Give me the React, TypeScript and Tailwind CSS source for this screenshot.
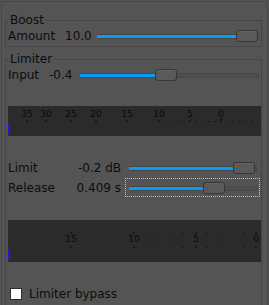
import React from "react";

function Slider({
  wClass,
  fillClass,
  thumbClass,
}: {
  wClass: string;
  fillClass: string;
  thumbClass: string;
}) {
  return (
    <div className={`relative h-[12px] shrink-0 ${wClass}`}>
      <div className="absolute left-0 right-0 top-[4px] h-[5px] border border-[#474747] bg-[#4e4e4e]" />
      <div className={`absolute left-0 top-[5px] h-[3px] bg-[#0a9cf4] ${fillClass}`} />
      <div
        className={`absolute top-0 h-[12px] w-[22px] rounded-[3px] border border-[#363636] bg-[#5a5a5a] shadow-[inset_0_1px_0_#646464] ${thumbClass}`}
      />
    </div>
  );
}

function Meter1() {
  const labels: [number, string][] = [
    [19, "35"],
    [38, "30"],
    [63, "25"],
    [88, "20"],
    [119, "15"],
    [151, "10"],
    [182, "5"],
    [213, "0"],
  ];
  const dots: number[] = [];
  for (let db = 9; db >= -6; db--) {
    if (db === 5 || db === 0) continue;
    dots.push(213 - 6.2 * db);
  }
  return (
    <svg width="253" height="30" className="block">
      <rect x="0" y="0" width="253" height="30" fill="#2b2b2b" />
      {labels.map(([x, t]) => (
        <text
          key={t}
          x={x}
          y={11}
          fontSize="9"
          fontFamily="DejaVu Sans, sans-serif"
          textAnchor="middle"
          fill="#0a0a0a"
        >
          {t}
        </text>
      ))}
      {labels.map(([x, t]) =>
        t === "0" ? (
          <rect key={"t" + t} x={x - 0.5} y={12} width="1" height="4" fill="#0a0a0a" />
        ) : (
          <rect key={"t" + t} x={x - 0.5} y={14} width="1" height="2" fill="#0a0a0a" />
        )
      )}
      {dots.map((x, i) => (
        <rect key={i} x={Math.round(x) - 0.5} y={15} width="1" height="1" fill="#0a0a0a" />
      ))}
      <rect x="0" y="17" width="1.5" height="11" fill="#1c1ce6" />
    </svg>
  );
}

function Meter2() {
  const labels: [number, string][] = [
    [63, "15"],
    [126, "10"],
    [188, "5"],
    [248, "0"],
  ];
  const dots: number[] = [];
  for (let db = 9; db >= 1; db--) {
    if (db === 5) continue;
    dots.push(248 - 12.2 * db);
  }
  return (
    <svg width="253" height="42" className="block">
      <rect x="0" y="0" width="253" height="42" fill="#2b2b2b" />
      {labels.map(([x, t]) => (
        <text
          key={t}
          x={x}
          y={22}
          fontSize="9"
          fontFamily="DejaVu Sans, sans-serif"
          textAnchor="middle"
          fill="#0a0a0a"
        >
          {t}
        </text>
      ))}
      {labels.map(([x, t]) => (
        <g key={"t" + t}>
          <rect x={x - 0.5} y={12} width="1" height="2" fill="#0a0a0a" />
          <rect x={x - 0.5} y={26} width="1" height="2" fill="#0a0a0a" />
        </g>
      ))}
      {dots.map((x, i) => (
        <g key={i}>
          <rect x={Math.round(x) - 0.5} y={13} width="1" height="1" fill="#0a0a0a" />
          <rect x={Math.round(x) - 0.5} y={27} width="1" height="1" fill="#0a0a0a" />
        </g>
      ))}
      <rect x="0" y="29" width="1.5" height="11" fill="#1c1ce6" />
    </svg>
  );
}

export default function App() {
  return (
    <div className="h-[305px] w-[269px] overflow-hidden bg-[#545454] font-['DejaVu_Sans',sans-serif] text-[12px] leading-[14px] text-[#0d0d0d]">
      <div className="ml-px mt-px h-[320px] w-[267px] border-l border-r border-t border-[#474747]">
        <fieldset className="ml-[3px] mt-[11px] w-[257px] border border-[#464646] pb-[4px] pl-[2px]">
          <legend className="px-[2px] leading-[14px]">Boost</legend>
          <div className="mt-[3px] flex h-[12px] items-center">
            <div className="w-[57px] shrink-0">Amount</div>
            <div className="w-[32px] shrink-0">10.0</div>
            <Slider wClass="w-[162px]" fillClass="w-[139px]" thumbClass="left-[139px]" />
          </div>
        </fieldset>

        <fieldset className="ml-[3px] mt-[5px] w-[257px] border border-[#464646] pb-[20px] pl-[2px]">
          <legend className="px-[2px] leading-[14px]">Limiter</legend>
          <div className="mt-[3px] flex h-[12px] items-center">
            <div className="w-[41px] shrink-0">Input</div>
            <div className="w-[31px] shrink-0">-0.4</div>
            <Slider wClass="w-[179px]" fillClass="w-[75px]" thumbClass="left-[75px]" />
          </div>

          <div className="mt-[25px]">
            <Meter1 />
          </div>

          <div className="mt-[22px] flex h-[19px] items-center">
            <div className="w-[60px] shrink-0">Limit</div>
            <div className="w-[53px] shrink-0 text-right">-0.2 dB</div>
            <div className="ml-[4px] flex h-[19px] w-[135px] shrink-0 items-center border border-transparent pl-[3px]">
              <Slider wClass="w-[128px]" fillClass="w-[104px]" thumbClass="left-[104px]" />
            </div>
          </div>
          <div className="mt-[1px] flex h-[19px] items-center">
            <div className="w-[60px] shrink-0">Release</div>
            <div className="w-[53px] shrink-0 text-right">0.409 s</div>
            <div className="ml-[4px] flex h-[19px] w-[135px] shrink-0 items-center border border-dotted border-[#c4c4c4] pl-[3px]">
              <Slider wClass="w-[128px]" fillClass="w-[74px]" thumbClass="left-[74px]" />
            </div>
          </div>

          <div className="mt-[23px]">
            <Meter2 />
          </div>

          <div className="mt-[25px] flex h-[14px] items-center">
            <div className="ml-[2px] h-[12px] w-[12px] shrink-0 border border-[#2e2e2e] bg-white" />
            <div className="ml-[7px]">Limiter bypass</div>
          </div>
        </fieldset>
      </div>
    </div>
  );
}
